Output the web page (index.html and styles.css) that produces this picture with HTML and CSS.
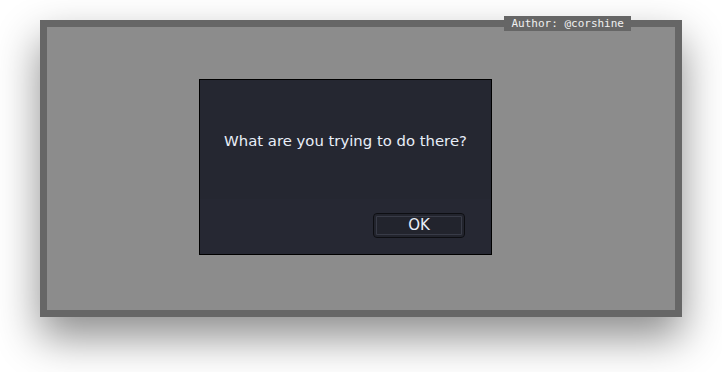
FILE: index.html
```html
<!DOCTYPE html>
<html>
<head>
  <title>Alert</title>
  <link rel="stylesheet" href="styles.css">
</head>
<body>
  <div class="frame">
    <span class="author">Author: @corshine</span>
    <div class="dialog">
      <div class="dialog-body">
        <p class="message">What are you trying to do there?</p>
      </div>
      <div class="dialog-footer">
        <button class="ok-btn">OK</button>
      </div>
    </div>
  </div>
</body>
</html>
```

FILE: styles.css
```css
/* Page */
body {
  margin: 0;
  padding: 20px 40px 60px;
  background-color: #fff;
  font-family: "DejaVu Sans", sans-serif;
}
.frame {
  position: relative;
  width: 628px;
  height: 231px;
  border: 7px solid #666;
  background-color: #8c8c8c;
  box-shadow: 0 20px 40px rgba(0, 0, 0, 0.45);
  padding-top: 52px;
}
.author {
  position: absolute;
  top: -11px;
  right: 44px;
  height: 15px;
  padding: 0 7px;
  background-color: #666;
  color: #f0f0f0;
  font-family: "DejaVu Sans Mono", monospace;
  font-size: 11px;
  line-height: 15px;
}
/* Dialog */
.dialog {
  width: 291px;
  margin-left: 152px;
  border: 1px solid #000;
  background-color: #252731;
}
.dialog-body {
  height: 119px;
  display: flex;
  align-items: center;
  justify-content: center;
}
.message {
  margin: 0;
  padding-top: 2px;
  color: #e8eef8;
  font-size: 14.85px;
}
.dialog-footer {
  height: 55px;
  display: flex;
  justify-content: flex-end;
  align-items: flex-start;
  padding-right: 26px;
  background-color: #262833;
}
.ok-btn {
  margin-top: 14px;
  width: 92px;
  height: 25px;
  border: 1px solid #0d0e12;
  border-radius: 4px;
  background-color: #22242d;
  box-shadow: inset 0 0 0 2px #22242d, inset 0 0 0 3px #383b47;
  color: #e8eef8;
  font-family: "DejaVu Sans", sans-serif;
  font-size: 15px;
  padding: 0;
  line-height: 23px;
}
```
